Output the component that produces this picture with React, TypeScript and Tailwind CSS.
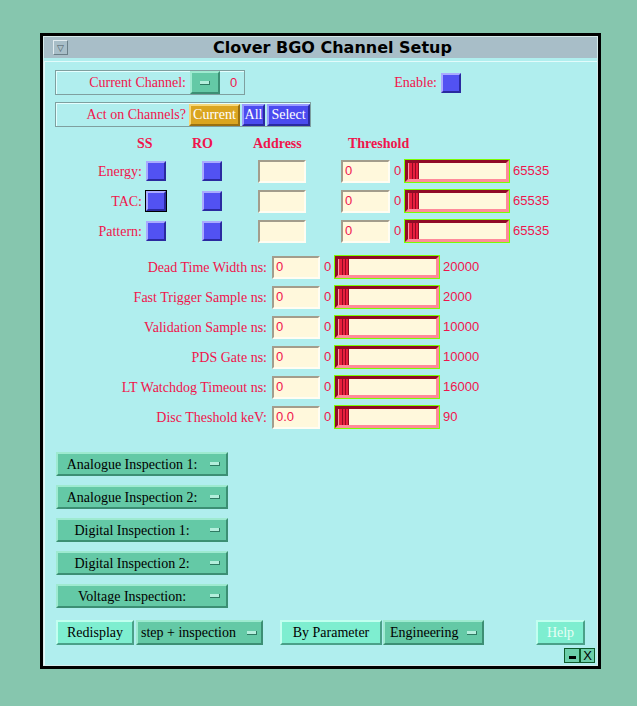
import React from 'react'

const serif = "font-['Liberation_Serif',serif] text-[14px]"
const sans = "font-['Liberation_Sans',sans-serif] text-[13px]"

function Check({ focus }: { focus?: boolean }) {
  return (
    <div
      className={`w-[20px] h-[20px] shrink-0 bg-[#5252f2] border-2 border-t-[#aaaaff] border-l-[#aaaaff] border-b-[#2a2aa0] border-r-[#2a2aa0] ${
        focus ? 'outline outline-1 outline-black' : ''
      }`}
    />
  )
}

function Entry({ value, wide }: { value: string; wide?: boolean }) {
  return (
    <div
      className={`${wide ? 'w-[49px]' : 'w-[48px]'} h-[23px] shrink-0 bg-[#fff8dc] border-2 border-t-[#a39d8c] border-l-[#a39d8c] border-b-[#fffdf2] border-r-[#fffdf2] pl-[2px] flex items-center text-[#f0144c] ${sans}`}
    >
      {value}
    </div>
  )
}

function Scale() {
  return (
    <div className="w-[106px] h-[24px] shrink-0 border border-[#7cfc00]">
      <div className="h-full border-[3px] border-t-[#900b26] border-l-[#900b26] border-b-[#ff8a9a] border-r-[#ff8a9a] bg-[#fff8dc] flex">
        <div className="w-[11px] h-full bg-[#e81f3d] border-l border-l-[#ff9aaa] border-r border-r-[#900b26] flex justify-center gap-[2px]">
          <div className="w-px h-full bg-[#900b26]" />
          <div className="w-px h-full bg-[#900b26]" />
        </div>
      </div>
    </div>
  )
}

function Dash() {
  return <div className="w-[10px] h-[4px] shrink-0 bg-[#b4eedc] border-b border-r border-[#2f7a62]" />
}

const channels = [
  { name: 'Energy:', focus: false },
  { name: 'TAC:', focus: true },
  { name: 'Pattern:', focus: false },
]

const params = [
  { name: 'Dead Time Width ns:', value: '0', max: '20000' },
  { name: 'Fast Trigger Sample ns:', value: '0', max: '2000' },
  { name: 'Validation Sample ns:', value: '0', max: '10000' },
  { name: 'PDS Gate ns:', value: '0', max: '10000' },
  { name: 'LT Watchdog Timeout ns:', value: '0', max: '16000' },
  { name: 'Disc Theshold keV:', value: '0.0', max: '90' },
]

const inspections = [
  'Analogue Inspection 1:',
  'Analogue Inspection 2:',
  'Digital Inspection 1:',
  'Digital Inspection 2:',
  'Voltage Inspection:',
]

const menuBtn =
  'h-[25px] shrink-0 bg-[#64c9a6] border-2 border-t-[#9eead0] border-l-[#9eead0] border-b-[#3c8f74] border-r-[#3c8f74] flex items-center text-black'
const plainBtn =
  'h-[25px] shrink-0 bg-[#7eeed0] border-2 border-t-[#c2fff0] border-l-[#c2fff0] border-b-[#4aa088] border-r-[#4aa088] flex items-center justify-center'

export default function App() {
  return (
    <div className="w-[637px] h-[706px] bg-[#86c6ae] pt-[33px] pl-[40px] overflow-hidden">
      {/* Window */}
      <div className="w-[561px] h-[636px] border-[3px] border-black bg-[#b0eeee] overflow-hidden">
        <div className="h-full border border-[#d6eaea] flex flex-col">
          {/* Title bar */}
          <div className="h-[21px] shrink-0 bg-[#a8bec8] flex items-center">
            <div className="ml-[9px] w-[15px] h-[15px] border border-t-[#e2ecf0] border-l-[#e2ecf0] border-b-[#6a7f88] border-r-[#6a7f88] flex items-center justify-center text-[9px] leading-none text-[#4a5a60]">
              ▽
            </div>
            <div className="flex-1 text-center font-['DejaVu_Sans',sans-serif] font-bold text-[16px] leading-none text-black">
              Clover BGO Channel Setup
            </div>
          </div>

          {/* Content */}
          <div className={`mt-[3px] flex-1 border-t border-l border-[#e2fbfb] pt-[8px] pl-[10px] text-[#f0144c] ${serif}`}>
            {/* Current channel + Enable */}
            <div className="h-[25px] flex items-center">
              <div className="w-[190px] h-[25px] border border-[#7f9f9f] shadow-[inset_1px_1px_0_#e4ffff] flex items-center">
                <div className="w-[130px] text-right">Current Channel:</div>
                <div className="ml-[4px] w-[30px] h-[23px] bg-[#64c9a6] border-2 border-t-[#9eead0] border-l-[#9eead0] border-b-[#3c8f74] border-r-[#3c8f74] flex items-center justify-center">
                  <Dash />
                </div>
                <div className={`ml-[10px] ${sans}`}>0</div>
              </div>
              <div className="ml-[144px] flex items-center">
                <div className="w-[48px] text-right">Enable:</div>
                <div className="ml-[4px]">
                  <Check />
                </div>
              </div>
            </div>

            {/* Act on channels */}
            <div className="mt-[7px] w-[256px] h-[25px] border border-[#7f9f9f] shadow-[inset_1px_1px_0_#e4ffff] flex items-center">
              <div className="w-[130px] text-right">Act on Channels?</div>
              <div className="ml-[3px] w-[51px] h-[22px] bg-[#daa520] border-2 border-t-[#f6d77a] border-l-[#f6d77a] border-b-[#9a7010] border-r-[#9a7010] text-white flex items-center justify-center">
                Current
              </div>
              <div className="ml-[2px] w-[23px] h-[22px] bg-[#4b4bef] border-2 border-t-[#9a9aff] border-l-[#9a9aff] border-b-[#2a2aa0] border-r-[#2a2aa0] text-white flex items-center justify-center">
                All
              </div>
              <div className="ml-[2px] w-[43px] h-[22px] bg-[#4b4bef] border-2 border-t-[#9a9aff] border-l-[#9a9aff] border-b-[#2a2aa0] border-r-[#2a2aa0] text-white flex items-center justify-center">
                Select
              </div>
            </div>

            {/* Column headers */}
            <div className="mt-[6px] h-[20px] flex items-center font-bold">
              <div className="w-[82px] shrink-0" />
              <div className="w-[55px] shrink-0">SS</div>
              <div className="w-[61px] shrink-0">RO</div>
              <div className="w-[95px] shrink-0">Address</div>
              <div>Threshold</div>
            </div>

            {/* Channel rows */}
            <div className="mt-[3px]">
              {channels.map((c) => (
                <div key={c.name} className="h-[30px] flex items-center">
                  <div className="w-[87px] shrink-0 text-right">{c.name}</div>
                  <div className="ml-[4px]">
                    <Check focus={c.focus} />
                  </div>
                  <div className="ml-[36px]">
                    <Check />
                  </div>
                  <div className="ml-[36px]">
                    <Entry value="" />
                  </div>
                  <div className="ml-[35px]">
                    <Entry value="0" wide />
                  </div>
                  <div className={`ml-[4px] w-[10px] shrink-0 ${sans}`}>0</div>
                  <Scale />
                  <div className={`ml-[3px] ${sans}`}>65535</div>
                </div>
              ))}
            </div>

            {/* Parameter rows */}
            <div className="mt-[6px]">
              {params.map((p) => (
                <div key={p.name} className="h-[30px] flex items-center">
                  <div className="w-[212px] shrink-0 text-right">{p.name}</div>
                  <div className="ml-[5px]">
                    <Entry value={p.value} />
                  </div>
                  <div className={`ml-[4px] w-[10px] shrink-0 ${sans}`}>0</div>
                  <Scale />
                  <div className={`ml-[3px] ${sans}`}>{p.max}</div>
                </div>
              ))}
            </div>

            {/* Inspection menus */}
            <div className="mt-[20px] ml-[1px] flex flex-col gap-[9px]">
              {inspections.map((name) => (
                <div key={name} className={`w-[172px] ${menuBtn} !h-[24px]`}>
                  <div className="flex-1 text-center pr-[4px]">{name}</div>
                  <div className="mr-[6px]">
                    <Dash />
                  </div>
                </div>
              ))}
            </div>

            {/* Bottom buttons */}
            <div className="mt-[12px] ml-[1px] flex items-center text-black">
              <div className={`w-[78px] ${plainBtn}`}>Redisplay</div>
              <div className={`ml-[2px] w-[127px] ${menuBtn}`}>
                <div className="flex-1 pl-[3px]">step + inspection</div>
                <div className="mr-[4px]">
                  <Dash />
                </div>
              </div>
              <div className={`ml-[17px] w-[102px] ${plainBtn}`}>By Parameter</div>
              <div className={`ml-[1px] w-[101px] ${menuBtn}`}>
                <div className="flex-1 pl-[5px]">Engineering</div>
                <div className="mr-[5px]">
                  <Dash />
                </div>
              </div>
              <div className={`ml-[52px] w-[49px] ${plainBtn} text-[#e6fff6]`}>Help</div>
            </div>

            {/* Window controls */}
            <div className="mt-[3px] ml-[509px] flex">
              <div className="w-[16px] h-[15px] bg-[#6ccfaa] border border-[#0e5a2a] flex items-end justify-center pb-[3px]">
                <div className="w-[7px] h-[3px] bg-black" />
              </div>
              <div className="w-[15px] h-[15px] bg-[#6ccfaa] border border-[#0e5a2a] flex items-center justify-center font-['Liberation_Sans',sans-serif] text-[13px] leading-none text-black">
                X
              </div>
            </div>
          </div>
        </div>
      </div>
    </div>
  )
}
